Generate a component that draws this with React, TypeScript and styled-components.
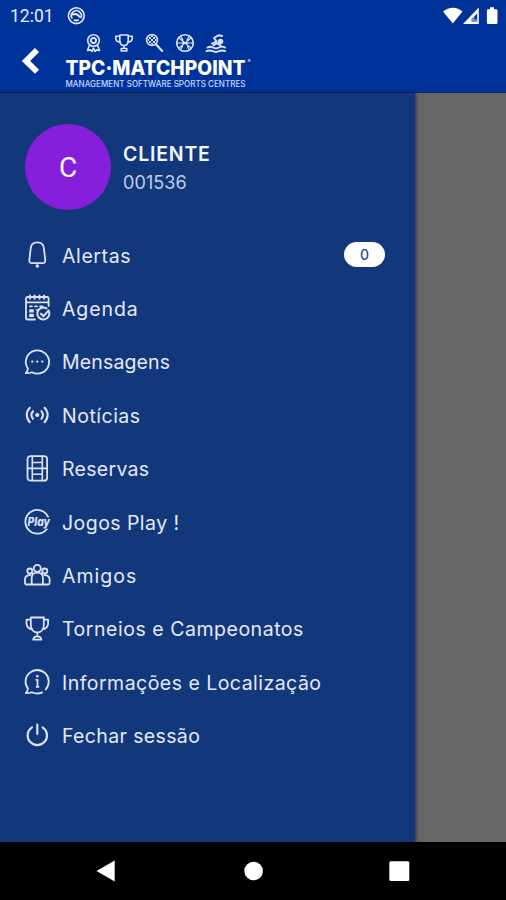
import React from "react";
import styled, { createGlobalStyle } from "styled-components";

const Global = createGlobalStyle`
  * { box-sizing: border-box; }
  body { margin: 0; background: #000; font-family: Inter, "Open Sans", sans-serif; }
`;

const Screen = styled.div`
  width: 506px;
  height: 900px;
  display: flex;
  flex-direction: column;
  overflow: hidden;
  background: #666;
`;

const Header = styled.header`
  height: 93px;
  flex: none;
  background: #003399;
  border-bottom: 1px solid #082b70;
  color: #fff;
`;

const StatusBar = styled.div`
  height: 31px;
  display: flex;
  align-items: center;
  padding: 1px 8px 0 10px;
`;

const Clock = styled.span`
  font: 400 17.5px/20px Roboto, sans-serif;
  letter-spacing: 0;
  width: 57px;
  color: #e8edff;
`;

const StatusIcons = styled.div`
  margin-left: auto;
  display: flex;
`;

const Brand = styled.div`
  height: 61px;
  display: flex;
  padding-left: 19px;
`;

const BackButton = styled.button`
  width: 46px;
  padding: 0 0 1px;
  border: 0;
  background: none;
  text-align: left;
  svg { display: block; }
`;

const LogoArt = styled.svg`
  display: block;
  overflow: visible;
`;

const Body = styled.main`
  flex: 1;
  min-height: 0;
  display: flex;
`;

const Drawer = styled.aside`
  width: 415px;
  background: #12377b;
  box-shadow: 1px 0 4px rgba(0, 0, 0, 0.55);
`;

const Profile = styled.section`
  height: 135px;
  display: flex;
  padding: 31px 0 0 25px;
  gap: 12px;
`;

const Avatar = styled.div`
  width: 86px;
  height: 86px;
  border-radius: 50%;
  background: #871edb;
  color: #fff;
  display: grid;
  place-items: center;
  font: 400 28px/1 Roboto, sans-serif;
  padding-top: 2px;
`;

const Identity = styled.div`
  padding-top: 17px;
`;

const Name = styled.div`
  font-size: 19.5px;
  line-height: 26px;
  font-weight: 600;
  letter-spacing: 0.8px;
  color: #f3f5ff;
`;

const Code = styled.div`
  margin-top: 3px;
  font-size: 18px;
  line-height: 26px;
  letter-spacing: 0.1px;
  color: #c3cce4;
`;

const Menu = styled.nav`
  display: flex;
  flex-direction: column;
`;

const Row = styled.div`
  height: 53.42px;
  display: flex;
  align-items: center;
  padding: 0 30px 0 24px;
`;

const Label = styled.span<{ $tracking: number }>`
  margin-left: 12px;
  padding-top: 1.6px;
  font-size: 19.5px;
  line-height: 26px;
  letter-spacing: ${(p) => p.$tracking}px;
  white-space: nowrap;
  color: #e4e9f8;
`;

const Badge = styled.span`
  margin-left: auto;
  width: 41px;
  height: 25px;
  border-radius: 13px;
  background: #fff;
  color: #2d4c8b;
  font-size: 14px;
  font-weight: 500;
  line-height: 26px;
  text-align: center;
`;

const NavBar = styled.footer`
  height: 58px;
  flex: none;
  background: #000;
  display: flex;
  justify-content: space-between;
  padding: 17px 94px 0;
  svg { display: block; }
`;

const Glyph = styled.svg`
  display: block;
  flex: none;
  width: 26px;
  height: 28px;
  fill: none;
  stroke: #dce3f5;
  stroke-width: 1.8;
  stroke-linecap: round;
  stroke-linejoin: round;
  overflow: visible;
`;

const icons: Record<string, React.ReactNode> = {
  bell: (
    <>
      <path d="M13.300 1.400c-3.900 0-6.300 2.300-6.600 6L5.400 18.500c-.3 2.400.5 3.600 2.600 3.600h10.600c2.100 0 2.900-1.200 2.600-3.600L19.900 7.400c-.3-3.700-2.700-6-6.600-6Z" />
      <circle cx="13.300" cy="25" r="1.800" fill="#dce3f5" stroke="none" />
    </>
  ),
  calendar: (
    <>
      <path d="M11 25.500H3.500a1.500 1.500 0 0 1-1.500-1.500V4.500A1.500 1.500 0 0 1 3.500 3h19.600A1.500 1.500 0 0 1 24.600 4.500V12M2 8.400h22.600" />
      <path d="M6 1.500v3.300M10.500 1.500v3.300M15.500 1.500v3.300M20 1.500v3.300" strokeWidth="1.900" />
      <path d="M6 12.300h2M11 12.300h2M16 12.300h2.500M6 16.200h3v1.500H6zM6 20.700h3v1.500H6zM12.500 16h1.500" strokeWidth="1.700" />
      <path d="M24.800 17a6 6 0 1 1-2.300-2.600M17 19.700l2.500 2.500 5-5.600" strokeWidth="2" />
    </>
  ),
  chat: (
    <>
      <path d="M3.900 20.600a11.600 11.600 0 1 1 4 3.600c-1.800.8-4 1.100-6.100 1 1.300-1.300 2-2.900 2.100-4.600Z" />
      <path d="M8.200 13.600h.1M13.200 13.600h.1M18.200 13.600h.1" strokeWidth="2.300" />
    </>
  ),
  broadcast: (
    <>
      <circle cx="13.200" cy="14" r="2.100" fill="#dce3f5" stroke="none" />
      <path d="M9 10.200c-1.800 2.200-1.800 5.400 0 7.600M17.400 10.200c1.800 2.200 1.800 5.400 0 7.600M5.800 6.800c-4 4.200-4 10.200 0 14.400M20.600 6.800c4 4.200 4 10.200 0 14.400" strokeWidth="2.100" />
    </>
  ),
  court: (
    <>
      <rect x="3.500" y="2.100" width="19.600" height="24.600" rx="3" />
      <path d="M8.300 2.200v24.400M18.300 2.200v24.400M3.500 14.400h19.600M8.300 8.500h10M8.300 20.300h10" strokeWidth="1.600" />
    </>
  ),
  play: (
    <>
      <path d="M24 8.600A11.900 11.900 0 1 0 22.600 21.200" />
      <text x="3.500" y="17.500" textLength="22.500" lengthAdjust="spacingAndGlyphs" fontFamily="Inter, sans-serif" fontSize="11.500" fontWeight="800" fontStyle="italic" fill="#dce3f5" stroke="none">Play</text>
    </>
  ),
  friends: (
    <path transform="translate(0 1)" d="M9.800 6.300a3.500 3.500 0 1 0 7 0 3.500 3.500 0 1 0-7 0M3.300 9a2.500 2.500 0 1 0 5 0 2.500 2.500 0 1 0-5 0M18.300 9a2.500 2.500 0 1 0 5 0 2.500 2.500 0 1 0-5 0M7.700 22.500v-6.700c0-3.300 2-5.200 5.600-5.200s5.600 1.900 5.600 5.200v6.700M7.700 22.500H2.500A1.500 1.500 0 0 1 1 21v-3.800c0-2.700 2-4 5-4M18.900 22.500h5.200a1.500 1.500 0 0 0 1.500-1.500v-3.800c0-2.700-2-4-5-4M7.700 22.500h11.200" />
  ),
  trophy: (
    <path d="M6.800 2.500h13v7c0 4.600-2.500 8-6.500 8s-6.500-3.400-6.500-8ZM6.800 4.600H2.500v3.900c0 3.200 2.500 5.600 5.600 5.600M19.800 4.600h4.300v3.900c0 3.200-2.500 5.600-5.600 5.600M13.300 17.500v3.500M9.200 24.700c.2-2.300 1.500-3.400 4.100-3.400s3.900 1.100 4.100 3.400Z" />
  ),
  info: (
    <>
      <path d="M3.900 20.600A11.600 11.600 0 1 1 21.800 21.300M3.900 20.600c-.1 1.700-.8 3.300-2.100 4.600 2.100.1 4.300-.2 6.100-1 3.300 1.600 7.200 1.600 10.200.2" />
      <path d="M12.300 11.800h1.200v7M12.500 18.800h2" strokeWidth="1.800" />
      <circle cx="13.300" cy="8.300" r="1.300" fill="#dce3f5" stroke="none" />
    </>
  ),
  power: <path transform="translate(0 .8)" d="M13.300 2.800v9.500M8 5.500a9.700 9.700 0 1 0 10.600 0" strokeWidth="2.100" />,
};

const items = [
  { icon: "bell", label: "Alertas", tracking: 0.6, badge: "0" },
  { icon: "calendar", label: "Agenda", tracking: 0.9 },
  { icon: "chat", label: "Mensagens", tracking: 0.15 },
  { icon: "broadcast", label: "Notícias", tracking: 0.5 },
  { icon: "court", label: "Reservas", tracking: 0.3 },
  { icon: "play", label: "Jogos Play !", tracking: 0.45 },
  { icon: "friends", label: "Amigos", tracking: 1 },
  { icon: "trophy", label: "Torneios e Campeonatos", tracking: 0.53 },
  { icon: "info", label: "Informações e Localização", tracking: 0.47 },
  { icon: "power", label: "Fechar sessão", tracking: 0.37 },
];

const Logo = () => (
  <LogoArt width="190" height="61" viewBox="65 31 190 61" fill="none" stroke="#dce5ff" strokeWidth="1.600" strokeLinejoin="round" strokeLinecap="round">
    <circle cx="93.500" cy="40.500" r="5.800" />
    <circle cx="93.500" cy="40.500" r="2.600" strokeDasharray="1.500 1" strokeWidth="2" />
    <path d="M89.300 45.500 87.500 50.500l3-.6 1.500 1.600 1.500-3.500 1.500 3.500 1.500-1.600 3 .6-1.800-5" />
    <path d="M119.800 35h8.400v5.500c0 3-1.500 5-4.200 5s-4.200-2-4.200-5ZM119.800 36.300h-4v2c0 2.300 1.500 3.800 4.500 3.800M128.200 36.300h4v2c0 2.300-1.500 3.800-4.500 3.800M124 45.500v3M121.200 51v-2.500h5.600V51Z" />
    <circle cx="152" cy="40" r="5.400" />
    <path d="m149 37 6 6M152 36l4 4M148.500 40.500l3.500 3.500M155 37l-6 6M152 44l4-4M148 40l4-4" strokeWidth="1" />
    <path d="m156.200 44.500 6 6.500" strokeWidth="2.100" />
    <circle cx="185" cy="43" r="8.300" />
    <path d="M180.500 36c3.500 3.500 3.500 10 0 14M189.500 36c-3.500 3.500-3.500 10 0 14M176.700 43h16.600M179 38l12 10M191 38l-12 10" strokeWidth="1.100" />
    <circle cx="220.500" cy="41.500" r="2" fill="#dce5ff" />
    <path d="m212 43.500 4.500-2.200-2.500-3.300 4.500-2.700 3.500.7M213.500 45.200l3.500-1.900 3.500 2.200" strokeWidth="1.900" />
    <path d="M207.500 47.500c2-1.200 3.500-1.200 5.500 0s4 1.200 6 0 4-1.200 6 0M206.500 51.200c2.500-1 4-1 6.200 0s4.200 1 6.300 0 4-1 6 0" strokeWidth="1.900" />
    <g fill="#fff" stroke="none" fontFamily="Inter, sans-serif">
      <text x="65.500" y="75" fontSize="20.300" fontWeight="800" textLength="180" lengthAdjust="spacingAndGlyphs">TPC·MATCHPOINT</text>
      <text x="247.500" y="62.500" fontSize="4.500">®</text>
      <text x="65.500" y="87" fontSize="8.700" fontWeight="500" fill="#c8d7ff" textLength="180" lengthAdjust="spacingAndGlyphs">MANAGEMENT SOFTWARE SPORTS CENTRES</text>
    </g>
  </LogoArt>
);

export default function App() {
  return (
    <>
      <Global />
      <Screen>
        <Header>
          <StatusBar>
            <Clock>12:01</Clock>
            <svg width="19" height="19" viewBox="0 0 19 19" fill="none" stroke="#e8edff" strokeWidth="1.600">
              <circle cx="9.300" cy="8.700" r="7.900" />
              <path d="M5.300 11.600A5 5 0 1 1 13.700 11.200" />
              <path d="M5.300 8c2.500-1.600 5.500-.9 7.800 2.500M7 12.700c1.600 1 3.300 1 4.800.1" strokeWidth="1.900" />
            </svg>
            <StatusIcons>
              <svg width="56" height="20" viewBox="442 5 56 20" fill="#fff">
                <path d="M443 10.500c5.700-5.100 14.300-5.100 19.500 0L452.800 22.500Z" />
                <path fillRule="evenodd" d="M478.800 6.500V23H463Zm-1.600 6-5.500 5.500v3h5.500Z" />
                <path d="M471.700 18 474.500 15.300V18.500H477.200V21h-5.500Z" fill="#8192c8" />
                <path d="M490 6.300h4v1.900h2.200a1.300 1.300 0 0 1 1.300 1.300v12.200a1.300 1.300 0 0 1-1.300 1.300h-8a1.300 1.300 0 0 1-1.300-1.300V9.500a1.300 1.300 0 0 1 1.300-1.300h1.800Z" />
              </svg>
            </StatusIcons>
          </StatusBar>
          <Brand>
            <BackButton aria-label="Voltar">
              <svg width="22" height="30" viewBox="19 46 22 30" fill="none" stroke="#fff" strokeWidth="5.800">
                <path d="M37 50 26 60.900l11 10.800" />
              </svg>
            </BackButton>
            <Logo />
          </Brand>
        </Header>
        <Body>
          <Drawer>
            <Profile>
              <Avatar>C</Avatar>
              <Identity>
                <Name>CLIENTE</Name>
                <Code>001536</Code>
              </Identity>
            </Profile>
            <Menu>
              {items.map((item) => (
                <Row key={item.label}>
                  <Glyph viewBox="0 0 26 28">{icons[item.icon]}</Glyph>
                  <Label $tracking={item.tracking}>{item.label}</Label>
                  {item.badge && <Badge>{item.badge}</Badge>}
                </Row>
              ))}
            </Menu>
          </Drawer>
        </Body>
        <NavBar>
          <svg width="24" height="24" viewBox="0 0 24 24" fill="#fff"><path d="M2.500 12 20.700 1.500v21Z" /></svg>
          <svg width="24" height="24" viewBox="0 0 24 24" fill="#fff"><circle cx="12.600" cy="12" r="9.300" /></svg>
          <svg width="24" height="24" viewBox="0 0 24 24" fill="#fff"><rect x="1.300" y="2.300" width="20" height="19.600" rx="1.500" /></svg>
        </NavBar>
      </Screen>
    </>
  );
}
